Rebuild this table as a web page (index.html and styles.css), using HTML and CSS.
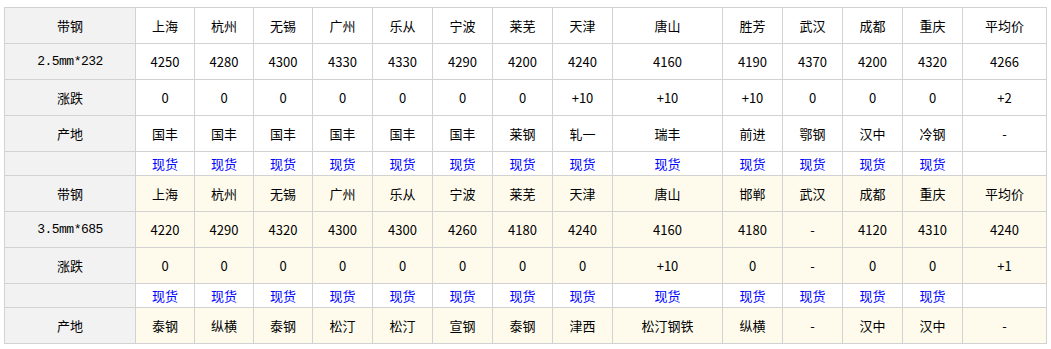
FILE: index.html
```html
<!DOCTYPE html>
<html lang="zh-CN">
<head>
<meta charset="utf-8">
<title>带钢价格</title>
<link rel="stylesheet" href="styles.css">
</head>
<body>
<table class="price">
  <colgroup>
    <col class="c-name">
    <col class="c59"><col class="c59"><col class="c59">
    <col class="c60"><col class="c60"><col class="c60"><col class="c60"><col class="c60">
    <col class="c110">
    <col class="c60"><col class="c60"><col class="c60"><col class="c60">
    <col class="c-avg">
  </colgroup>
  <tbody class="blk-a">
    <tr class="r"><th>带钢</th><td>上海</td><td>杭州</td><td>无锡</td><td>广州</td><td>乐从</td><td>宁波</td><td>莱芜</td><td>天津</td><td>唐山</td><td>胜芳</td><td>武汉</td><td>成都</td><td>重庆</td><td>平均价</td></tr>
    <tr class="r"><th class="mono">2.5mm*232</th><td>4250</td><td>4280</td><td>4300</td><td>4330</td><td>4330</td><td>4290</td><td>4200</td><td>4240</td><td>4160</td><td>4190</td><td>4370</td><td>4200</td><td>4320</td><td>4266</td></tr>
    <tr class="r"><th>涨跌</th><td>0</td><td>0</td><td>0</td><td>0</td><td>0</td><td>0</td><td>0</td><td>+10</td><td>+10</td><td>+10</td><td>0</td><td>0</td><td>0</td><td>+2</td></tr>
    <tr class="r"><th>产地</th><td>国丰</td><td>国丰</td><td>国丰</td><td>国丰</td><td>国丰</td><td>国丰</td><td>莱钢</td><td>轧一</td><td>瑞丰</td><td>前进</td><td>鄂钢</td><td>汉中</td><td>冷钢</td><td>-</td></tr>
    <tr class="lk"><th></th><td><a href="#">现货</a></td><td><a href="#">现货</a></td><td><a href="#">现货</a></td><td><a href="#">现货</a></td><td><a href="#">现货</a></td><td><a href="#">现货</a></td><td><a href="#">现货</a></td><td><a href="#">现货</a></td><td><a href="#">现货</a></td><td><a href="#">现货</a></td><td><a href="#">现货</a></td><td><a href="#">现货</a></td><td><a href="#">现货</a></td><td></td></tr>
  </tbody>
  <tbody class="blk-b">
    <tr class="r"><th>带钢</th><td>上海</td><td>杭州</td><td>无锡</td><td>广州</td><td>乐从</td><td>宁波</td><td>莱芜</td><td>天津</td><td>唐山</td><td>邯郸</td><td>武汉</td><td>成都</td><td>重庆</td><td>平均价</td></tr>
    <tr class="r"><th class="mono">3.5mm*685</th><td>4220</td><td>4290</td><td>4320</td><td>4300</td><td>4300</td><td>4260</td><td>4180</td><td>4240</td><td>4160</td><td>4180</td><td>-</td><td>4120</td><td>4310</td><td>4240</td></tr>
    <tr class="r"><th>涨跌</th><td>0</td><td>0</td><td>0</td><td>0</td><td>0</td><td>0</td><td>0</td><td>0</td><td>+10</td><td>0</td><td>-</td><td>0</td><td>0</td><td>+1</td></tr>
    <tr class="lk"><th></th><td><a href="#">现货</a></td><td><a href="#">现货</a></td><td><a href="#">现货</a></td><td><a href="#">现货</a></td><td><a href="#">现货</a></td><td><a href="#">现货</a></td><td><a href="#">现货</a></td><td><a href="#">现货</a></td><td><a href="#">现货</a></td><td><a href="#">现货</a></td><td><a href="#">现货</a></td><td><a href="#">现货</a></td><td><a href="#">现货</a></td><td></td></tr>
    <tr class="r"><th>产地</th><td>泰钢</td><td>纵横</td><td>泰钢</td><td>松汀</td><td>松汀</td><td>宣钢</td><td>泰钢</td><td>津西</td><td>松汀钢铁</td><td>纵横</td><td>-</td><td>汉中</td><td>汉中</td><td>-</td></tr>
  </tbody>
</table>
</body>
</html>
```

FILE: styles.css
```css
html, body {
  margin: 0;
  padding: 0;
  background: #ffffff;
}
body {
  padding: 7px 0 0 4px;
  font-family: "Noto Sans CJK SC", "Noto Sans", sans-serif;
  font-size: 13px;
  color: #000000;
}
.price {
  border-collapse: collapse;
  table-layout: fixed;
  width: 1042px;
}
.c-name { width: 131px; }
.c59 { width: 59px; }
.c60 { width: 60px; }
.c110 { width: 110px; }
.c-avg { width: 84px; }
.price th,
.price td {
  border: 1px solid #d2d2d2;
  padding: 0;
  text-align: center;
  vertical-align: middle;
  font-weight: normal;
  line-height: 16px;
  white-space: nowrap;
}
.price th {
  background: #f2f2f2;
}
.price tr.r { height: 36px; }
.price tr.lk { height: 24px; }
.blk-b tr.r td { background: #fefbec; }
.lk td { background: #ffffff; }
.price a {
  color: #0000ff;
  text-decoration: none;
}
.mono {
  font-family: "Liberation Mono", "DejaVu Sans Mono", monospace;
  font-size: 13px;
  letter-spacing: -0.5px;
}
```
